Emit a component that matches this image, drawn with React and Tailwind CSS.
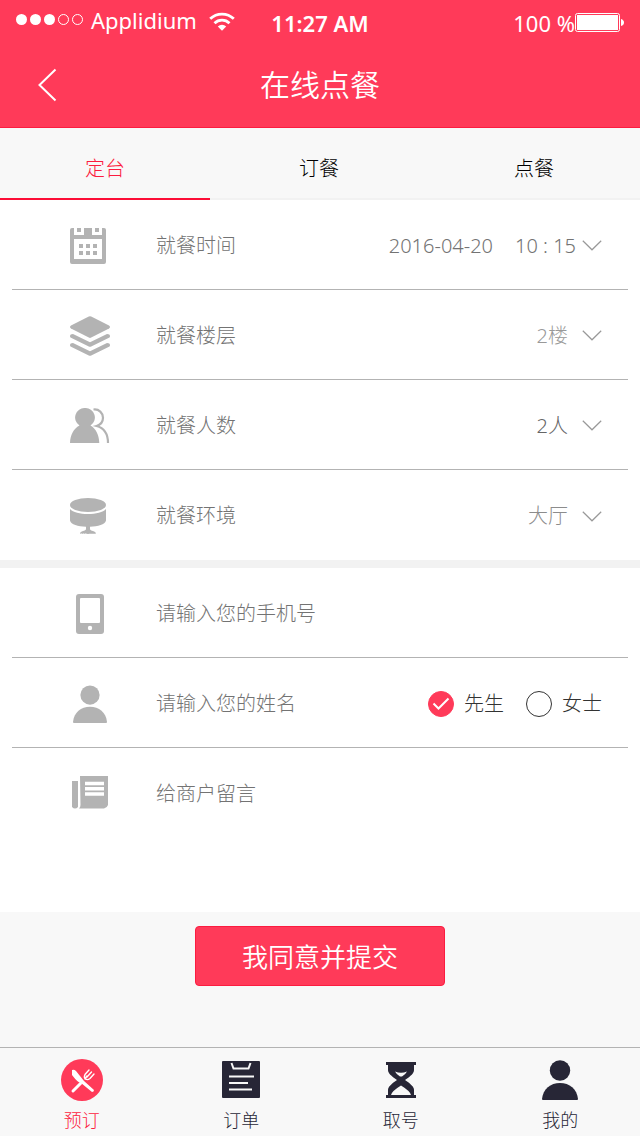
import React, { useState } from 'react';

const CalendarIcon = () => (
  <svg width="36" height="36" viewBox="0 0 36 36" className="block">
    <path
      fill="#b3b3b3"
      fillRule="evenodd"
      d="M2 0h2v7h10V0h8v7h10V0h2a2 2 0 0 1 2 2v32a2 2 0 0 1-2 2H2a2 2 0 0 1-2-2V2a2 2 0 0 1 2-2zM4 11v20h28V11z"
    />
    <path
      fill="#b3b3b3"
      d="M7 0h4v4H7zM25 0h4v4h-4zM9 16h4v4H9zM16 16h4v4h-4zM23 16h4v4h-4zM9 23h4v4H9zM16 23h4v4h-4zM23 23h4v4h-4z"
    />
  </svg>
);

const LayersIcon = () => (
  <svg width="40" height="40" viewBox="0 0 40 40" className="block" fill="#b3b3b3">
    <path d="M18.8.4Q20-.1 21.200.4L39 9.600Q41 11 39 12.400L21.200 21.600Q20 22.200 18.800 21.600L1 12.400Q-1 11 1 9.600z" />
    <path d="M3 18L20 26.300 37 18Q40 18 40 20.300 40 21.300 39 21.800L21.200 30.500Q20 31 18.800 30.500L1 21.800Q0 21.300 0 20.300 0 18 3 18z" />
    <path d="M3 27L20 35.300 37 27Q40 27 40 29.300 40 30.300 39 30.800L21.200 39.500Q20 40 18.800 39.500L1 30.800Q0 30.300 0 29.300 0 27 3 27z" />
  </svg>
);

const PeopleIcon = () => (
  <svg width="40" height="36" viewBox="0 0 40 36" className="block">
    <path
      fill="#b3b3b3"
      d="M15 0a9.500 9.500 0 0 1 5.500 17.500C26 20.500 29 27 29.300 35H0C.3 27 3.500 20.500 9.500 17.500A9.500 9.500 0 0 1 15 0z"
    />
    <path
      fill="none"
      stroke="#b3b3b3"
      strokeWidth="2.200"
      d="M23.500 1.500C29 .8 33 5 33 9.800c0 4-2.500 7-6.500 8.200C34 20 38 26.500 38 35"
    />
  </svg>
);

const TableIcon = () => (
  <svg width="36" height="36" viewBox="0 0 36 36" className="block" fill="#b3b3b3">
    <ellipse cx="18" cy="7" rx="18" ry="7" />
    <path d="M0 11c3 3.500 10 5 18 5s15-1.500 18-5v11.500c-1 4-8 6-16 6.200V31c0 2 6 2 6 4.500 0 .5-16 .5-16 0C10 33 16 33 16 31v-2.300C8 28.500 1 26.500 0 22.500z" />
  </svg>
);

const PhoneIcon = () => (
  <svg width="28" height="40" viewBox="0 0 28 40" className="block">
    <rect width="28" height="40" rx="3" fill="#b3b3b3" />
    <rect x="4" y="4" width="20" height="25" rx="1" fill="#fff" />
    <circle cx="14" cy="34" r="2.200" fill="#fff" />
  </svg>
);

const PersonIcon = ({ className }) => (
  <svg viewBox="0 0 36 40" className={className} fill="currentColor">
    <circle cx="18" cy="10.500" r="10.200" />
    <path d="M0 39C1 29 8.500 23 18 23s17 6 18 16q0 1-1 1H1q-1 0-1-1z" />
  </svg>
);

const NoteIcon = () => (
  <svg width="36" height="33" viewBox="0 0 36 33" className="block">
    <path fill="#b3b3b3" d="M0 5h6v26q-3 3-6 0zM8 0h28v29q-1 3-4 3.500H7Q8.500 31 8.500 29z" />
    <path stroke="#fff" strokeWidth="3.500" d="M13 7.500h19M13 12.800h19M13 18h19" />
  </svg>
);

const Chevron = () => (
  <svg width="20" height="11" viewBox="0 0 20 11" className="block shrink-0">
    <path d="M.8.8l9.200 9 9.200-9" fill="none" stroke="#999" strokeWidth="1.200" />
  </svg>
);

const WifiIcon = () => (
  <svg width="26" height="19" viewBox="0 0 26 19" className="block">
    <g fill="none" stroke="#fff" strokeWidth="2.800">
      <path d="M1.200 6.800a17 17 0 0 1 23.600 0" />
      <path d="M5.500 11.200a10.800 10.800 0 0 1 15 0" />
    </g>
    <path fill="#fff" d="M8.800 14.500a6 6 0 0 1 8.400 0L13 18.800z" />
  </svg>
);

const BatteryIcon = () => (
  <svg width="49" height="20" viewBox="0 0 49 20" className="block">
    <rect x=".5" y=".5" width="44" height="18" rx="2" fill="none" stroke="#fff" />
    <rect x="2" y="2" width="41" height="15" fill="#fff" />
    <path d="M46 6q3 1 3 3.500T46 13z" fill="#fff" />
  </svg>
);

const DiningIcon = () => (
  <svg width="42" height="42" viewBox="0 0 42 42" className="block">
    <circle cx="21" cy="21" r="21" fill="#ff3a59" />
    <path d="M12 32l7.500-7.500" stroke="#fff" strokeWidth="3" strokeLinecap="round" />
    <path
      d="M24 20l2-3M28 11l-4 4.500q-1.500 3 .5 4.500 2 1.500 4.500-.5l4-4.500M30.500 13L26 18"
      fill="none"
      stroke="#fff"
      strokeWidth="1.400"
      strokeLinecap="round"
    />
    <path d="M11 11q2-1 4 1l8 10 10 9q0 2-2 2L20 24q-3 0-9-8z" fill="#fff" />
  </svg>
);

const OrderIcon = () => (
  <svg width="38" height="38" viewBox="0 0 38 38" className="block">
    <rect width="38" height="37" rx="1" fill="#272636" />
    <path
      d="M9.500 2l2 5.500h15l2-5.500M7 15.500h25M7 22h19M7 28.500h23"
      fill="none"
      stroke="#f8f8f8"
      strokeWidth="2"
    />
  </svg>
);

const HourglassIcon = () => (
  <svg width="30" height="36" viewBox="0 0 30 36" className="block">
    <path
      fill="#272636"
      d="M0 0h30v3h-2v5c0 3-3 6-9 10 6 4 9 7 9 10v5h2v3H0v-3h2v-5c0-3 3-6 9-10C5 14 2 11 2 8V3H0z"
    />
    <path fill="#f8f8f8" d="M9 9.500q6 2.500 12 0-1.500 3-5 5h-2q-3.500-2-5-5zM5 33q1-4 10-9.500Q24 29 25 33z" />
  </svg>
);

const tabs = ['定台', '订餐', '点餐'];

const floors = ['2楼', '1楼', '3楼'];
const guests = ['2人', '4人', '6人'];
const areas = ['大厅', '包间'];

const navItems = [
  { label: '预订', icon: <DiningIcon /> },
  { label: '订单', icon: <OrderIcon /> },
  { label: '取号', icon: <HourglassIcon /> },
  { label: '我的', icon: <PersonIcon className="block h-10 w-9 text-[#272636]" /> },
];

const Row = ({ icon, children, last, iconStart }) => (
  <div
    className={`mx-3 flex h-[90px] items-center gap-[46px] pt-0.5 pl-[58px] pr-[26px] ${
      last ? '' : 'border-b border-[#b3b3b3]'
    }`}
  >
    <div className={`flex w-10 shrink-0 ${iconStart ? 'justify-start' : 'justify-center'}`}>{icon}</div>
    {children}
  </div>
);

const Select = ({ id, label, options, className = '' }) => (
  <select
    id={id}
    aria-label={label}
    className={`appearance-none bg-transparent [field-sizing:content] focus:outline-none ${className}`}
  >
    {options.map((option) => (
      <option key={option}>{option}</option>
    ))}
  </select>
);

const SelectRow = ({ id, icon, label, options, color, last }) => (
  <Row icon={icon} last={last} iconStart>
    <label htmlFor={id} className="flex-1">{label}</label>
    <div className="flex items-center gap-3.5">
      <Select id={id} options={options} className={color} />
      <Chevron />
    </div>
  </Row>
);

const TitleRadio = ({ value, checked, onChange }) => (
  <label className="flex items-center gap-2.5 text-[#333]">
    <span className="grid place-items-center">
      <input
        type="radio"
        name="title"
        value={value}
        checked={checked}
        onChange={() => onChange(value)}
        className="col-start-1 row-start-1 size-[26px] appearance-none rounded-full border border-[#333] checked:border-[#ff3a59] checked:bg-[#ff3a59]"
      />
      {checked && (
        <svg width="18" height="14" viewBox="0 0 18 14" className="pointer-events-none col-start-1 row-start-1">
          <path d="M1.500 6.500l5 5 10-10" fill="none" stroke="#fff" strokeWidth="2" />
        </svg>
      )}
    </span>
    {value}
  </label>
);

const App = () => {
  const [activeTab, setActiveTab] = useState('定台');
  const [activeNav, setActiveNav] = useState('预订');
  const [title, setTitle] = useState('先生');

  return (
    <div className="flex min-h-screen flex-col bg-[#f8f8f8] font-['Noto_Sans','Noto_Sans_CJK_SC',sans-serif] text-xl font-light text-[#737373]">
      <header className="border-b border-[#fc1c40] bg-[#ff3a59] text-white">
        <div className="grid h-[46px] grid-cols-[1fr_auto_1fr] items-center px-4 text-[22px] font-normal">
          <div className="flex items-center gap-2 pb-1.5">
            <div className="flex gap-[3px]">
              <span className="size-[11px] rounded-full bg-white" />
              <span className="size-[11px] rounded-full bg-white" />
              <span className="size-[11px] rounded-full bg-white" />
              <span className="size-[11px] rounded-full border border-white" />
              <span className="size-[11px] rounded-full border border-white" />
            </div>
            <span className="mr-1">Applidium</span>
            <div className="pt-1">
              <WifiIcon />
            </div>
          </div>
          <span className="font-semibold">11:27 AM</span>
          <div className="flex items-center justify-end">
            <span>100 %</span>
            <BatteryIcon />
          </div>
        </div>
        <div className="grid h-[81px] grid-cols-[1fr_auto_1fr] items-center px-9 pb-1">
          <button type="button" aria-label="返回" className="justify-self-start">
            <svg width="22" height="34" viewBox="0 0 22 34" className="block">
              <path d="M19.500 1.500L3.500 17l16 15.500" fill="none" stroke="#fff" strokeWidth="2" />
            </svg>
          </button>
          <h1 className="text-3xl font-[350]">在线点餐</h1>
        </div>
      </header>

      <div className="grid h-[72px] grid-cols-[210fr_218fr_212fr]">
        {tabs.map((tab) => (
          <button
            key={tab}
            type="button"
            onClick={() => setActiveTab(tab)}
            className={`border-b-2 pt-3 ${
              activeTab === tab ? 'border-[#fc0d36] text-[#fc1c40]' : 'border-[#f2f2f2] text-black'
            }`}
          >
            {tab}
          </button>
        ))}
      </div>

      <form className="flex flex-1 flex-col" onSubmit={(e) => e.preventDefault()}>
        <div className="border-b-8 border-[#f2f2f2] bg-white">
          <Row icon={<CalendarIcon />} iconStart>
            <label htmlFor="date" className="flex-1">就餐时间</label>
            <div className="flex items-center gap-1.5">
              <div className="flex gap-[22px]">
                <Select id="date" options={['2016-04-20', '2016-04-21']} />
                <Select id="time" label="时间" options={['10 : 15', '11 : 15']} />
              </div>
              <Chevron />
            </div>
          </Row>
          <SelectRow id="floor" icon={<LayersIcon />} label="就餐楼层" options={floors} color="text-[#999]" />
          <SelectRow id="guests" icon={<PeopleIcon />} label="就餐人数" options={guests} color="text-[#666]" />
          <SelectRow id="area" icon={<TableIcon />} label="就餐环境" options={areas} color="text-[#8c8c8c]" last />
        </div>

        <div className="bg-white">
          <Row icon={<PhoneIcon />}>
            <input
              type="tel"
              aria-label="手机号"
              placeholder="请输入您的手机号"
              className="min-w-0 flex-1 bg-transparent placeholder:text-[#737373] focus:outline-none"
            />
          </Row>
          <Row icon={<PersonIcon className="block h-[38px] w-[34px] text-[#b3b3b3]" />}>
            <input
              type="text"
              aria-label="姓名"
              placeholder="请输入您的姓名"
              className="min-w-0 flex-1 bg-transparent placeholder:text-[#737373] focus:outline-none"
            />
            <div className="flex gap-[22px]">
              <TitleRadio value="先生" checked={title === '先生'} onChange={setTitle} />
              <TitleRadio value="女士" checked={title === '女士'} onChange={setTitle} />
            </div>
          </Row>
          <div className="mx-3 flex h-[164px] gap-[46px] pl-[58px] pr-[26px] pt-7">
            <div className="flex w-10 shrink-0 justify-center">
              <NoteIcon />
            </div>
            <textarea
              aria-label="给商户留言"
              placeholder="给商户留言"
              className="min-w-0 flex-1 resize-none bg-transparent pt-1 placeholder:text-[#737373] focus:outline-none"
            />
          </div>
        </div>

        <button
          type="submit"
          className="mx-auto my-3.5 h-[60px] w-[250px] rounded border border-[#fc1c40] bg-[#ff3a59] pt-0.5 text-[26px] font-[350] text-white"
        >
          我同意并提交
        </button>
      </form>

      <nav className="grid h-[89px] grid-cols-4 border-t border-[#b3b3b3] pl-0.5">
        {navItems.map((item) => (
          <button
            key={item.label}
            type="button"
            onClick={() => setActiveNav(item.label)}
            className={`flex flex-col items-center gap-1 pt-2.5 text-lg ${
              activeNav === item.label ? 'text-[#fc1c40]' : 'text-[#272636]'
            }`}
          >
            <span className="flex h-11 items-center">{item.icon}</span>
            {item.label}
          </button>
        ))}
      </nav>
    </div>
  );
};

export default App;
